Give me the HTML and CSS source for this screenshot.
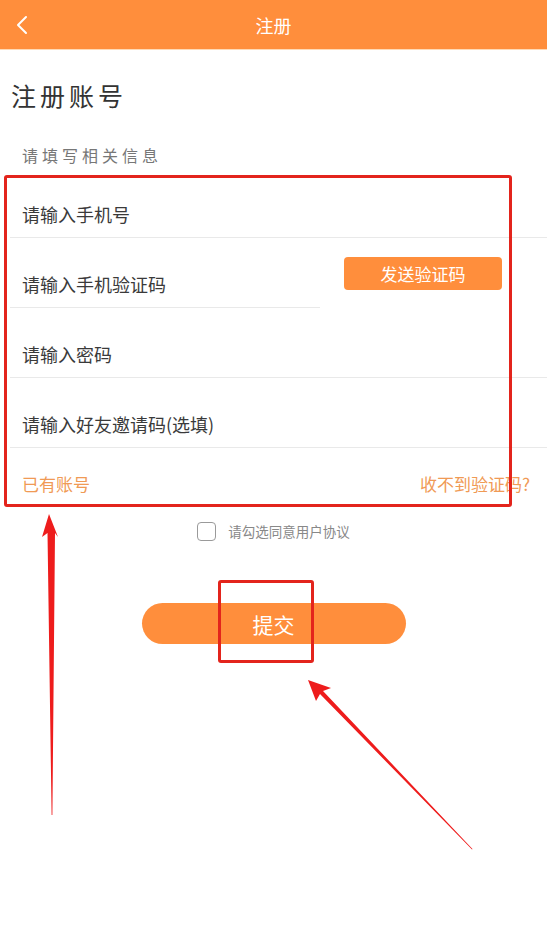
FILE: index.html
```html
<!DOCTYPE html>
<html>
<head>
    <meta charset="utf-8">
    <title>注册</title>
    <link rel="stylesheet" href="styles.css">
</head>
<body>
    <div class="pantalla">
        <header class="barra">
            <a class="volver" href="#">
                <svg width="14" height="20" viewBox="0 0 14 20"><path d="M11 2 L3 10 L11 18" fill="none" stroke="#fff" stroke-width="2" stroke-linecap="round" stroke-linejoin="round"/></svg>
            </a>
            <h1 class="barra-titulo">注册</h1>
            <span></span>
        </header>

        <h2 class="titulo">注册账号</h2>
        <p class="subtitulo">请填写相关信息</p>

        <form class="registro-form">
            <div class="campo">
                <input class="campo-input" type="text" placeholder="请输入手机号">
            </div>
            <div class="campo-codigo">
                <div class="campo campo-corto">
                    <input class="campo-input" type="text" placeholder="请输入手机验证码">
                </div>
                <button type="button" class="codigo-button">发送验证码</button>
            </div>
            <div class="campo">
                <input class="campo-input" type="password" placeholder="请输入密码">
            </div>
            <div class="campo">
                <input class="campo-input" type="text" placeholder="请输入好友邀请码(选填)">
            </div>
            <div class="enlaces">
                <a href="#">已有账号</a>
                <a href="#">收不到验证码?</a>
            </div>

            <label class="acuerdo">
                <input type="checkbox" class="acuerdo-check">
                <span>请勾选同意用户协议</span>
            </label>

            <div class="enviar-fila">
                <button type="button" class="enviar-button">提交</button>
            </div>
        </form>

        <!-- marcas encima de la captura -->
        <div class="marca marca-form"></div>
        <div class="marca marca-enviar"></div>
        <svg class="flechas" width="547" height="950" viewBox="0 0 547 950">
            <polygon points="49,514 42,537 47.5,533 51.6,815 52.4,815 55,533 58,537" fill="#ee1c1c"/>
            <polygon points="308,680 331,688 323,691 472.5,849 472,849.5 320,694 316,701" fill="#ee1c1c"/>
        </svg>
    </div>
</body>
</html>
```

FILE: styles.css
```css
* {
    box-sizing: border-box;
}

body {
    margin: 0;
    background-color: #fff;
    font-family: "Noto Sans CJK SC", "Noto Sans", sans-serif;
    color: #333;
}

.pantalla {
    position: relative;
    width: 547px;
    height: 950px;
    overflow: hidden;
}

.barra {
    height: 50px;
    background-color: #ff8e3c;
    border-bottom: 1px solid #ffd9b5;
    display: grid;
    grid-template-columns: 60px 1fr 60px;
    align-items: center;
}

.volver {
    display: flex;
    padding-left: 15px;
    padding-top: 1px;
}

.barra-titulo {
    margin: 0;
    text-align: center;
    color: #fff;
    font-size: 18px;
    font-weight: normal;
}

.titulo {
    margin: 30px 0 0 11px;
    font-size: 25px;
    font-weight: normal;
    letter-spacing: 4px;
    line-height: 30px;
    color: #333;
}

.subtitulo {
    margin: 34px 0 0 22px;
    font-size: 16px;
    letter-spacing: 4px;
    line-height: 22px;
    color: #777;
}

.registro-form {
    margin-top: 2px;
}

.campo {
    margin-left: 10px;
    height: 70px;
    border-bottom: 1px solid #e9e9e9;
    display: flex;
    align-items: flex-end;
    padding: 0 0 10px 12px;
}

.campo-input {
    border: none;
    outline: none;
    padding: 0;
    width: 100%;
    font-family: inherit;
    font-size: 18px;
    line-height: 26px;
    color: #333;
    background: transparent;
}

.campo-input::placeholder {
    color: #3a3a3a;
}

.campo-codigo {
    display: flex;
    align-items: flex-start;
}

.campo-corto {
    width: 310px;
    flex-shrink: 0;
}

.codigo-button {
    margin: 19px 0 0 24px;
    width: 158px;
    height: 33px;
    border: none;
    border-radius: 4px;
    background-color: #ff8e3c;
    color: #fff;
    font-family: inherit;
    font-size: 17px;
}

.enlaces {
    display: flex;
    justify-content: space-between;
    padding: 24px 17px 0 22px;
    font-size: 17px;
    line-height: 24px;
}

.enlaces a {
    color: #f09a55;
    text-decoration: none;
}

.acuerdo {
    margin-top: 25px;
    display: flex;
    justify-content: center;
    align-items: center;
    gap: 12px;
    font-size: 13.5px;
    color: #888;
}

.acuerdo-check {
    appearance: none;
    margin: 0;
    width: 19px;
    height: 19px;
    border: 1.5px solid #9a9a9a;
    border-radius: 4px;
}

.enviar-fila {
    margin-top: 62px;
    display: flex;
    justify-content: center;
}

.enviar-button {
    width: 264px;
    height: 41px;
    border: none;
    border-radius: 21px;
    background-color: #ff8e3c;
    color: #fff;
    font-family: inherit;
    font-size: 21px;
}

.marca {
    position: absolute;
    border: 3px solid #e3241c;
    border-radius: 3px;
}

.marca-form {
    left: 4px;
    top: 175px;
    width: 508px;
    height: 332px;
}

.marca-enviar {
    left: 218px;
    top: 580px;
    width: 96px;
    height: 83px;
}

.flechas {
    position: absolute;
    left: 0;
    top: 0;
}
```
